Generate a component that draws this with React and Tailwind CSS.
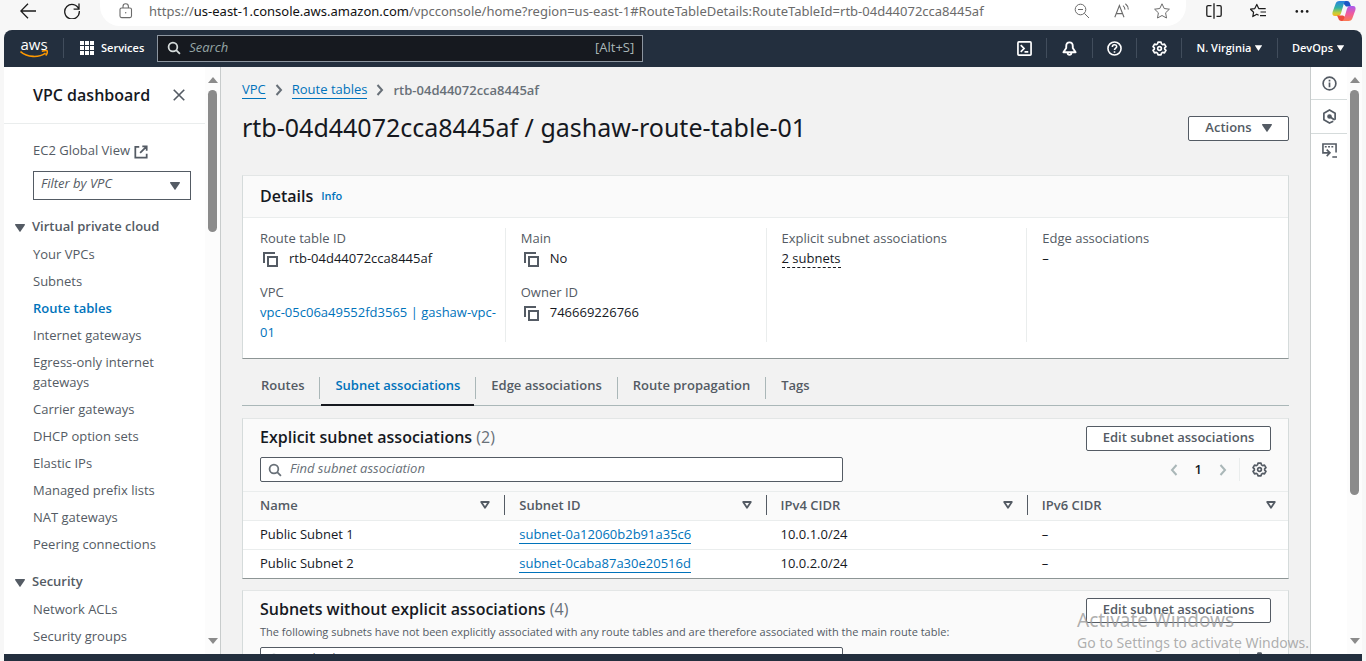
import React from "react";

const sidebarVpc = [
  "Your VPCs",
  "Subnets",
  "Route tables",
  "Internet gateways",
  "Egress-only internet gateways",
  "Carrier gateways",
  "DHCP option sets",
  "Elastic IPs",
  "Managed prefix lists",
  "NAT gateways",
  "Peering connections",
];
const sidebarSecurity = ["Network ACLs", "Security groups"];
const tabs = ["Routes", "Subnet associations", "Edge associations", "Route propagation", "Tags"];
const columns = ["Name", "Subnet ID", "IPv4 CIDR", "IPv6 CIDR"];
const rows = [
  ["Public Subnet 1", "subnet-0a12060b2b91a35c6", "10.0.1.0/24", "–"],
  ["Public Subnet 2", "subnet-0caba87a30e20516d", "10.0.2.0/24", "–"],
];

function Icon({ children, className = "size-4", sw = 2, vb = "0 0 16 16" }) {
  return (
    <svg viewBox={vb} className={className} fill="none" stroke="currentColor" strokeWidth={sw} aria-hidden="true">
      {children}
    </svg>
  );
}
const Caret = ({ className = "h-2 w-[10px]" }) => (
  <svg viewBox="0 0 10 8" className={className} fill="currentColor" aria-hidden="true">
    <path d="M.6 0h8.8c.5 0 .7.5.5.9L5.5 7.6a.6.6 0 0 1-1 0L.1.9C-.1.5.1 0 .6 0z" />
  </svg>
);
const Search = ({ className }) => (
  <Icon className={className}>
    <circle cx="6.8" cy="6.8" r="5" />
    <path d="M10.5 10.5l4.3 4.3" />
  </Icon>
);
const Gear = ({ className = "size-4" }) => (
  <Icon className={className} sw={1.8}>
    <path
      strokeLinejoin="round"
      d="M6.4 1.2h3.2l.5 1.9 1.3.8 1.9-.6 1.6 2.7-1.4 1.4v1.2l1.4 1.4-1.6 2.7-1.9-.6-1.3.8-.5 1.9H6.4l-.5-1.9-1.3-.8-1.9.6L1.1 10l1.4-1.4V7.4L1.1 6l1.6-2.7 1.9.6 1.3-.8z"
    />
    <circle cx="8" cy="8" r="2" />
  </Icon>
);
const Copy = () => (
  <Icon className="size-4 shrink-0 text-[#545b64]">
    <path d="M2 12V2h11" />
    <path d="M6 6h9v9H6z" />
  </Icon>
);
const Chevron = ({ flip, className = "h-3 w-2" }) => (
  <Icon vb="0 0 8 12" className={className}>
    <path d={flip ? "M6.5 1L2 6l4.5 5" : "M1.5 1L6 6l-4.5 5"} />
  </Icon>
);

function BrowserBar() {
  return (
    <div className="flex h-[30px] shrink-0 items-start bg-[#f7f7f7] text-[#1b1b1b]">
      <button aria-label="Back" className="ml-5 mt-[3px] size-4">
        <Icon sw={1.3}>
          <path d="M16 8H1M8 .8L.8 8 8 15.2" />
        </Icon>
      </button>
      <button aria-label="Refresh" className="ml-7 mt-[3px] size-4">
        <Icon sw={1.3}>
          <path d="M14.9 6.2A7.3 7.3 0 1 0 15.3 8M15 .6v5.6H9.6" />
        </Icon>
      </button>
      <div className="ml-5 flex h-[26px] flex-1 items-start rounded-b-[20px] bg-white pl-[18px] pr-4 text-[#6b6b6b]">
        <Icon className="mt-[3px] size-4 shrink-0" sw={1.1}>
          <rect x="2" y="5" width="11.5" height="9.6" rx="1.6" />
          <path d="M5 5V3.4a2.7 2.7 0 0 1 5.4 0V5" />
          <circle cx="7.7" cy="9.8" r=".7" fill="currentColor" stroke="none" />
        </Icon>
        <span className="ml-[15px] flex-1 truncate font-['Noto_Sans','Open_Sans',sans-serif] text-[13px] leading-[22px]">
          https://<span className="text-[#111]">us-east-1.console.aws.amazon.com</span>
          /vpcconsole/home?region=us-east-1#RouteTableDetails:RouteTableId=rtb-04d44072cca8445af
        </span>
        <div className="flex items-center gap-6 pt-[3px]">
          <button aria-label="Zoom out" className="size-4">
            <Icon sw={1}>
              <circle cx="6.5" cy="6.5" r="5.3" />
              <path d="M10.4 10.4l4.6 4.6M4 6.5h5" />
            </Icon>
          </button>
          <button aria-label="Read aloud" className="size-4">
            <Icon sw={1.1}>
              <path d="M.8 14.2L5.4 2.6 10 14.2M2.3 10.6h6.2M9 2.6c1.3 1 1.9 2.3 2 4M11.4.8c1.9 1.4 2.8 3.2 2.9 5.8" />
            </Icon>
          </button>
          <button aria-label="Add to favorites" className="size-4">
            <Icon sw={1}>
              <path strokeLinejoin="round" d="M8 .8l2.2 4.7 5.2.7-3.8 3.6.9 5.2L8 12.5 3.5 15l.9-5.2L.6 6.2l5.2-.7z" />
            </Icon>
          </button>
        </div>
      </div>
      <div className="flex items-start gap-7 pl-5 pt-[3px]">
        <button aria-label="Split screen" className="size-4">
          <Icon sw={1.3}>
            <path d="M5.5 2.6H2.1A1.3 1.3 0 0 0 .8 3.9v8.2c0 .7.6 1.3 1.3 1.3h3.4M10.5 2.6h3.4c.7 0 1.3.6 1.3 1.3v8.2c0 .7-.6 1.3-1.3 1.3h-3.4M8 .2v15.6" />
          </Icon>
        </button>
        <button aria-label="Favorites" className="size-4">
          <Icon sw={1.2}>
            <path strokeLinejoin="round" d="M8.6 12.2L6.8 11.2 2.8 13.6l.8-4.4L.5 6.2l4.3-.6L6.8 1.4l1.9 4.2h7M10.5 9H16M10 12.6h6" />
          </Icon>
        </button>
        <button aria-label="More" className="size-4">
          <Icon className="size-4">
            <g fill="currentColor" stroke="none">
              <circle cx="2.8" cy="8.4" r="1.3" />
              <circle cx="8" cy="8.4" r="1.3" />
              <circle cx="13.2" cy="8.4" r="1.3" />
            </g>
          </Icon>
        </button>
      </div>
      <button aria-label="Copilot" className="ml-[22px] mr-[10px] h-[22px] w-[24px]">
        <svg viewBox="0 0 24 22" className="h-[22px] w-[24px]" aria-hidden="true">
          <defs>
            <linearGradient id="ca" x1="0" y1="0" x2="0" y2="1">
              <stop offset="0" stopColor="#2a7fe0" />
              <stop offset=".45" stopColor="#2fb2a4" />
              <stop offset=".8" stopColor="#c9cf35" />
              <stop offset="1" stopColor="#f6b425" />
            </linearGradient>
            <linearGradient id="cb" x1="0" y1="0" x2="0" y2="1">
              <stop offset="0" stopColor="#a85bf0" />
              <stop offset=".5" stopColor="#ee5ba0" />
              <stop offset="1" stopColor="#fb7a52" />
            </linearGradient>
          </defs>
          <path fill="#1c55c4" d="M8 1h7c2 0 2.600 1.200 3.200 3l.8 2.600h-5L11 3z" />
          <path fill="url(#ca)" d="M7.500 1H14c-1.400.6-2 2-2.500 3.800L9.400 12c-.6 2.200-1.400 4-3.400 4H3c-2.400 0-3-1.800-2.400-4L3.500 4C4.100 2.200 5.300 1 7.500 1z" />
          <path fill="#ee4b3c" d="M5 15.500h6l3 2-1 3.500H9.500c-2 0-2.600-1-3.200-2.800z" />
          <path fill="url(#cb)" d="M16.500 21H10c1.400-.6 2-2 2.500-3.800l2.100-7.200c.6-2.200 1.400-4 3.400-4h3c2.400 0 3 1.800 2.400 4l-2.900 8c-.6 1.800-1.800 3-4 3z" />
        </svg>
      </button>
    </div>
  );
}

function AwsHeader() {
  return (
    <header className="flex h-[37px] shrink-0 items-center rounded-t-lg bg-[#232f3e] pb-px text-[11px] font-semibold text-white">
      <a href="#home" aria-label="AWS home" className="ml-4 flex w-7 flex-col items-center">
        <span className="text-[15px] font-medium leading-[12px]">aws</span>
        <svg viewBox="0 0 28 8" className="h-2 w-7" fill="none" stroke="#ff9900" strokeWidth="1.600" aria-hidden="true">
          <path d="M.5 1.500c7 6 18 6.500 25 1.600M21.800 1.200c2.500-.6 5-.9 5.400-.2.400.7-.3 2.900-1.500 4.500" />
        </svg>
      </a>
      <span className="ml-[15px] h-5 w-px bg-[#414d5c]" />
      <button className="ml-4 flex items-center gap-[7px]">
        <svg viewBox="0 0 14 14" className="size-[14px]" fill="currentColor" aria-hidden="true">
          {[0, 5, 10].map((y) => [0, 5, 10].map((x) => <rect key={`${x}${y}`} x={x} y={y} width="4" height="4" />))}
        </svg>
        Services
      </button>
      <label className="ml-[13px] flex h-[27px] w-[486px] items-center border border-[#8c959f] bg-[#16191f] px-2">
        <Search className="ml-px size-[14px] text-[#d5dbdb]" />
        <input
          aria-label="Search"
          placeholder="Search"
          className="ml-2 min-w-0 flex-1 bg-transparent text-[13px] font-normal outline-none placeholder:italic placeholder:text-[#95a5a6]"
        />
        <span className="text-[13px] font-normal text-[#aab7b8]">[Alt+S]</span>
      </label>
      <div className="ml-auto flex h-5 items-center divide-x divide-[#414d5c] pr-1">
        <button aria-label="CloudShell" className="flex h-5 w-[45px] items-center justify-center">
          <Icon className="size-[15px]" sw={1.8}>
            <rect x="1" y="1" width="14" height="14" rx="1" />
            <path d="M4 4.500L7.500 8 4 11.500M8 11.500h4" />
          </Icon>
        </button>
        <button aria-label="Notifications" className="flex h-5 w-[46px] items-center justify-center">
          <Icon className="size-[15px]">
            <path strokeLinejoin="round" d="M8 1.500c-2.300 0-3.500 1.800-3.500 4v2L1.500 12h13l-3-4.500v-2c0-2.200-1.200-4-3.500-4z" />
            <path d="M6 12.500c0 3 4 3 4 0" />
          </Icon>
        </button>
        <button aria-label="Help" className="flex h-5 w-[44px] items-center justify-center">
          <Icon className="size-[15px]" sw={1.700}>
            <circle cx="8" cy="8" r="7" />
            <path d="M5.700 6.300c0-3 4.600-3 4.600-.2C10.300 7.700 8 7.700 8 9.700M8 10.900v1.700" />
          </Icon>
        </button>
        <button aria-label="Settings" className="flex h-5 w-[45px] items-center justify-center">
          <Gear className="size-[15px]" />
        </button>
        <button className="flex h-5 w-[96px] items-center justify-center gap-1">
          N. Virginia <Caret className="h-[6px] w-[7px]" />
        </button>
        <button className="flex h-5 w-[80px] items-center justify-center gap-1">
          DevOps <Caret className="h-[6px] w-[7px]" />
        </button>
      </div>
    </header>
  );
}

function Scrollbar({ thumb }) {
  return (
    <div className="flex w-[15px] shrink-0 flex-col items-center bg-[#fcfcfc] pb-[10px] pt-[10px] text-[#8b8b8b]" aria-hidden="true">
      <svg viewBox="0 0 10 6" className="h-[6px] w-[10px] shrink-0" fill="currentColor"><path d="M5 0l5 6H0z" /></svg>
      <div className={`mt-[7px] w-[9px] shrink-0 rounded-full bg-[#8b8b8b] ${thumb}`} />
      <svg viewBox="0 0 10 6" className="mt-auto h-[6px] w-[10px] shrink-0" fill="currentColor"><path d="M0 0h10L5 6z" /></svg>
    </div>
  );
}

function NavGroup({ title, items }) {
  return (
    <section>
      <button className="flex items-center gap-[7px] font-semibold leading-5">
        <Caret className="mt-1 h-2 w-[10px]" />
        {title}
      </button>
      <ul className="mt-2 flex flex-col gap-[7px] pl-[18px] pr-8">
        {items.map((t) => (
          <li key={t}>
            <a href="#nav" className={t === "Route tables" ? "block font-semibold leading-5 text-[#0073bb]" : "block leading-5"}>
              {t}
            </a>
          </li>
        ))}
      </ul>
    </section>
  );
}

function Sidebar() {
  return (
    <aside className="flex w-[217px] shrink-0 overflow-hidden border-r border-[#c8cccc] bg-white text-[#545b64]">
      <div className="min-w-0 flex-1 overflow-hidden">
        <div className="flex h-[57px] items-center justify-between border-b border-[#eaeded] pl-[29px] pr-[20px]">
          <h2 className="pb-px text-[16px] font-semibold text-[#16191f]">VPC dashboard</h2>
          <button aria-label="Close" className="size-3">
            <Icon className="size-3" sw={2.200}>
              <path d="M1 1l14 14M15 1L1 15" />
            </Icon>
          </button>
        </div>
        <div className="pl-[29px] pr-[14px] pt-4">
          <a href="#ec2" className="flex items-center gap-1 leading-5">
            EC2 Global View
            <Icon className="mt-1 size-[14px]">
              <path d="M6 2H1.500v12.500h13V10M9.500 1.500h5v5M14.500 1.500L7 9" />
            </Icon>
          </a>
          <div className="mt-[11px] flex h-[29px] items-center border border-[#545b64] pr-[10px]">
            <select aria-label="Filter by VPC" className="h-full min-w-0 flex-1 appearance-none bg-transparent pb-1 pl-[7px] italic outline-none">
              <option>Filter by VPC</option>
            </select>
            <Caret />
          </div>
        </div>
        <nav className="flex flex-col gap-[17px] pl-[11px] pt-4">
          <NavGroup title="Virtual private cloud" items={sidebarVpc} />
          <NavGroup title="Security" items={sidebarSecurity} />
        </nav>
      </div>
      <Scrollbar thumb="h-[142px]" />
    </aside>
  );
}

const card = "border border-[#e3e6e6] border-x-[#d5dbdb] border-b-[#8d9595] bg-white";
const outline = "rounded-xs border border-[#545b64] bg-white font-semibold text-[#545b64]";

function Field({ label, children }) {
  return (
    <div className="leading-5">
      <dt className="text-[#545b64]">{label}</dt>
      <dd className="text-[#16191f]">{children}</dd>
    </div>
  );
}
const Copied = ({ children }) => (
  <span className="flex items-center gap-[11px] pl-[2px]">
    <button aria-label="Copy" className="mt-[2px] size-4">
      <Copy />
    </button>
    {children}
  </span>
);

function Details() {
  const side = "-ml-4 flex flex-col gap-[14px] border-l border-[#eaeded] pl-[15px]";
  return (
    <section className={`mt-8 ${card}`}>
      <div className="flex h-[42px] items-center gap-2 border-b border-[#eaeded] bg-[#fafafa] px-[17px] pb-[2px]">
        <h2 className="text-[16px] font-semibold">Details</h2>
        <a href="#info" className="pt-[2px] text-[11px] font-semibold text-[#0073bb]">Info</a>
      </div>
      <dl className="grid grid-cols-4 gap-8 px-[17px] pb-4 pt-[10px]">
        <div className="flex flex-col gap-[14px]">
          <Field label="Route table ID"><Copied>rtb-04d44072cca8445af</Copied></Field>
          <Field label="VPC">
            <a href="#vpc" className="-mr-3 block text-[#0073bb]">vpc-05c06a49552fd3565 | gashaw-vpc-<br />01</a>
          </Field>
        </div>
        <div className={side}>
          <Field label="Main"><Copied>No</Copied></Field>
          <Field label="Owner ID"><Copied>746669226766</Copied></Field>
        </div>
        <div className={side}>
          <Field label="Explicit subnet associations">
            <button className="border-b border-dashed border-[#16191f] leading-[17px]">2 subnets</button>
          </Field>
        </div>
        <div className={side}>
          <Field label="Edge associations">–</Field>
        </div>
      </dl>
    </section>
  );
}

function CardTop({ title, count, note }) {
  return (
    <div className="border-b border-[#eaeded] bg-[#fafafa] px-[17px] pb-[9px] pt-[7px]">
      <div className="flex items-start justify-between">
        <h2 className="text-[16px] font-semibold leading-[23px]">
          {title} <span className="font-normal text-[#687078]">({count})</span>
        </h2>
        <button className={`h-[25px] w-[185px] pb-px ${outline}`}>Edit subnet associations</button>
      </div>
      {note && <p className="text-[11px] leading-[18px] text-[#545b64]">{note}</p>}
      <div className="mt-[6px] flex items-center justify-between">
        <label className="flex h-[25px] w-[583px] items-center rounded-xs border border-[#545b64] bg-white px-[7px] text-[#687078]">
          <Search className="size-[14px]" />
          <input
            aria-label="Find subnet association"
            placeholder="Find subnet association"
            className="ml-2 min-w-0 flex-1 bg-transparent pb-[2px] outline-none placeholder:italic placeholder:text-[#687078]"
          />
        </label>
        <div className="flex items-center pr-1 text-[#aab7b8]">
          <button aria-label="Previous page"><Chevron flip /></button>
          <button className="mx-[17px] pb-[2px] font-semibold leading-5 text-[#16191f]">1</button>
          <button aria-label="Next page"><Chevron /></button>
          <button aria-label="Preferences" className="ml-3 border-l border-[#eaeded] py-1 pl-3 text-[#545b64]"><Gear className="size-[15px]" /></button>
        </div>
      </div>
    </div>
  );
}

function SubnetTable() {
  return (
    <table className="w-full table-fixed text-left leading-5">
      <thead>
        <tr className="h-7 border-b border-[#eaeded] bg-[#fafafa] text-[#545b64]">
          {columns.map((c, i) => (
            <th key={c} className="p-0 pb-[2px] font-semibold">
              <div className={`flex items-center justify-between ${i === 0 ? "pl-[17px]" : "border-l border-[#545b64] pl-[14px]"} ${i === 3 ? "pr-3" : "pr-[14px]"}`}>
                {c}
                <Icon vb="0 0 10 8" className="h-2 w-[10px]" sw={1.800}>
                  <path strokeLinejoin="round" d="M1.200 1h7.600L5 6.800z" />
                </Icon>
              </div>
            </th>
          ))}
        </tr>
      </thead>
      <tbody>
        {rows.map((r) => (
          <tr key={r[0]} className="h-[29px] border-b border-[#eaeded] last:border-b-0">
            {r.map((v, i) => (
              <td key={i} className={i === 0 ? "p-0 pb-[2px] pl-[17px]" : "p-0 pb-[2px] pl-[15px]"}>
                {i === 1 ? <a href="#subnet" className="border-b border-[#0073bb] text-[#0073bb]">{v}</a> : v}
              </td>
            ))}
          </tr>
        ))}
      </tbody>
    </table>
  );
}

function Main() {
  return (
    <main className="min-w-0 flex-1 overflow-hidden bg-[#f2f2f2] px-[21px] pt-[13px] text-[#16191f]">
      <nav aria-label="Breadcrumb" className="flex items-center gap-[9px] leading-5 text-[#687078]">
        <a href="#vpc" className="border-b border-[#0073bb] leading-[17px] text-[#0073bb]">VPC</a>
        <Chevron />
        <a href="#tables" className="border-b border-[#0073bb] leading-[17px] text-[#0073bb]">Route tables</a>
        <Chevron />
        <span className="font-semibold">rtb-04d44072cca8445af</span>
      </nav>
      <div className="mt-[10px] flex h-[33px] items-center justify-between">
        <h1 className="font-['Noto_Sans','Open_Sans',sans-serif] text-[25px] leading-8">rtb-04d44072cca8445af / gashaw-route-table-01</h1>
        <button className={`mt-1 flex h-[25px] w-[101px] items-center justify-center gap-[10px] pb-[2px] ${outline}`}>
          Actions <Caret />
        </button>
      </div>
      <Details />
      <div role="tablist" className="mt-3 flex h-[35px] border-b border-[#aab7b8] pl-1 font-semibold text-[#545b64]">
        {tabs.map((t, i) => (
          <div key={t} className="flex items-start">
            {i > 0 && <span className="mt-[6px] h-[22px] w-px bg-[#aab7b8]" />}
            <button
              role="tab"
              aria-selected={i === 1}
              className={i === 1 ? "mx-px h-[35px] border-b-2 border-[#16191f] px-[14px] pb-[3px] text-[#0073bb]" : "h-[34px] px-[15px] pb-1"}
            >
              {t}
            </button>
          </div>
        ))}
      </div>
      <section className={`mt-3 ${card}`}>
        <CardTop title="Explicit subnet associations" count={2} />
        <SubnetTable />
      </section>
      <section className={`mt-[11px] ${card}`}>
        <CardTop
          title="Subnets without explicit associations"
          count={4}
          note="The following subnets have not been explicitly associated with any route tables and are therefore associated with the main route table:"
        />
      </section>
    </main>
  );
}

function Rail() {
  return (
    <div className="flex w-[37px] shrink-0 flex-col divide-y divide-[#d5dbdb] border-l border-[#c8cccc] bg-white text-[#545b64]">
      <button aria-label="Info" className="flex h-[33px] items-center justify-center">
        <Icon className="size-[15px]" sw={1.800}>
          <circle cx="8" cy="8" r="6.800" />
          <path d="M8 6.800V12M8 4v1.800" />
        </Icon>
      </button>
      <button aria-label="Diagnostics" className="flex h-[34px] items-center justify-center">
        <Icon className="size-[15px]" sw={1.800}>
          <path strokeLinejoin="round" d="M12 13l-4 2-6-3.500v-7L8 1l6 3.500v7" />
          <circle cx="8" cy="8" r="1.600" fill="currentColor" />
          <path d="M8 8l5.500 3.800" />
        </Icon>
      </button>
      <button aria-label="Shell" className="flex h-[32px] items-center justify-center">
        <Icon className="size-[15px]" sw={1.700}>
          <path d="M15 10V1H1v9.500h7M5 7l3.500 3.500L5 14M11 15h5" />
          <path strokeDasharray="2 1.500" d="M3 4h10" />
        </Icon>
      </button>
    </div>
  );
}

export default function App() {
  return (
    <div className="relative flex h-screen flex-col overflow-hidden bg-[#f7f7f7] font-['Open_Sans','Noto_Sans',sans-serif] text-[13px]">
      <BrowserBar />
      <div className="mx-1 flex min-h-0 flex-1 flex-col">
        <AwsHeader />
        <div className="flex min-h-0 flex-1">
          <Sidebar />
          <Main />
          <Rail />
          <Scrollbar thumb="h-[405px]" />
        </div>
        <footer className="h-[7px] shrink-0 bg-[#232f3e]" />
      </div>
      <div className="pointer-events-none absolute bottom-2 right-[57px] font-['Noto_Sans',sans-serif] text-[#9a9a9a]/80">
        <p className="text-[19px] leading-6">Activate Windows</p>
        <p className="text-[14px] leading-[21px]">Go to Settings to activate Windows.</p>
      </div>
    </div>
  );
}
